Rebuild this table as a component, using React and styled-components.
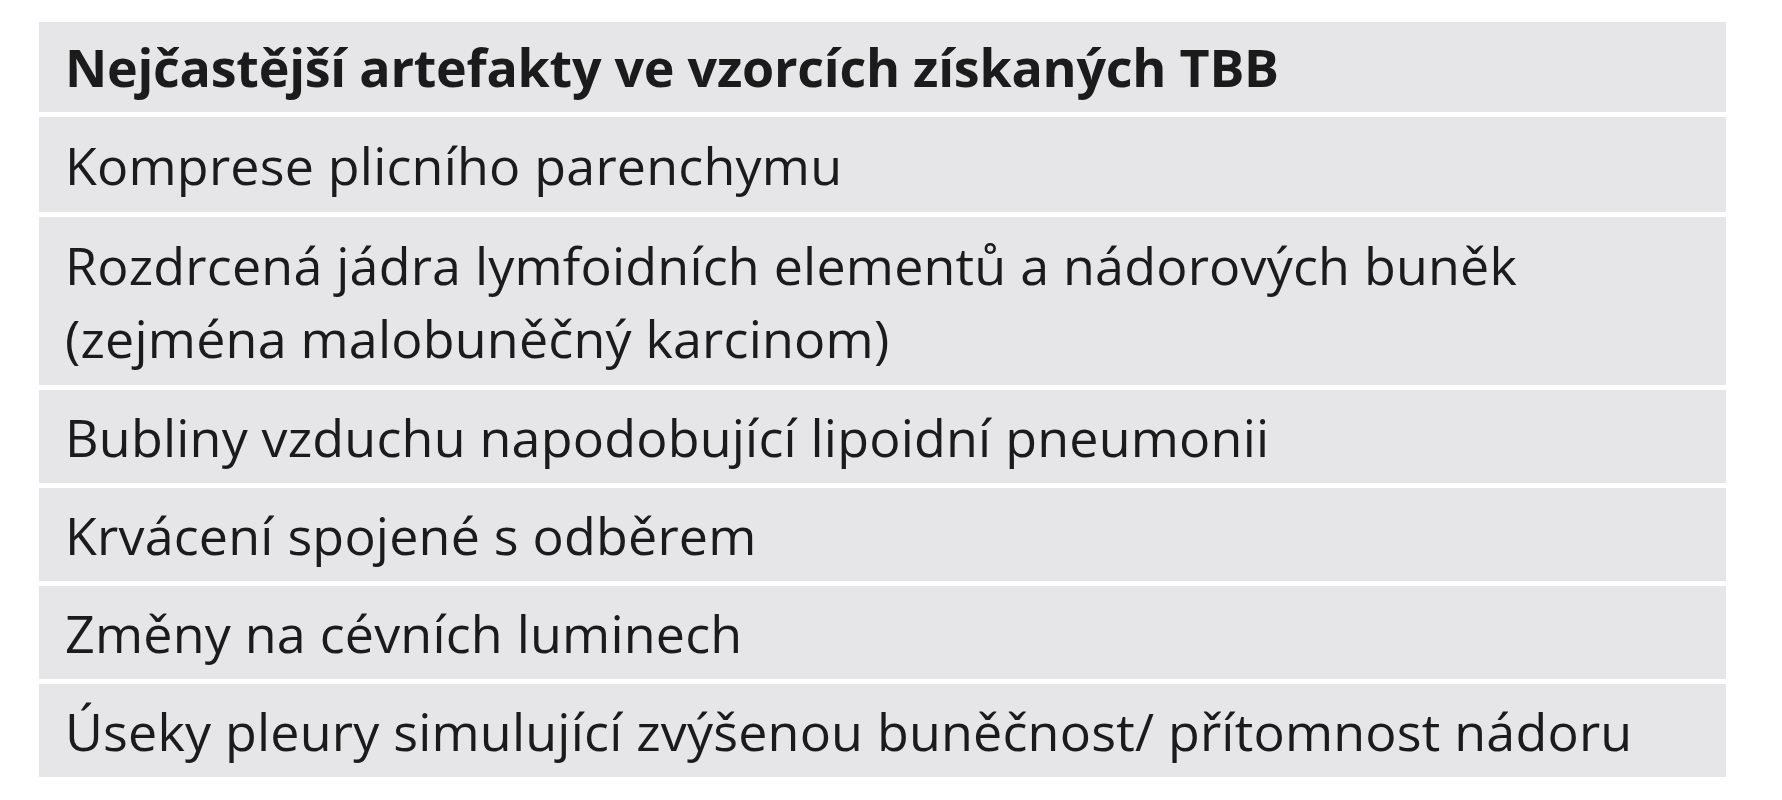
import React from "react";
import styled, { createGlobalStyle } from "styled-components";

const Global = createGlobalStyle`
  html, body { margin: 0; padding: 0; background: #ffffff; }
  body { font-family: "Open Sans", "Noto Sans", sans-serif; }
`;

const Page = styled.div`
  padding: 22px 0 0 39px;
  width: 1687px;
`;

const Table = styled.div`
  display: flex;
  flex-direction: column;
  gap: 5px;
`;

const Row = styled.div`
  background: #e6e6e8;
  padding: ${(p) => (p.$head ? "8px 26px 9px" : `${p.$pad}px 26px`)};
  font-size: 52px;
  line-height: 73px;
  color: #1b1b1b;
  font-weight: ${(p) => (p.$head ? 700 : 400)};
  letter-spacing: ${(p) => (p.$head ? "-0.25px" : "0.2px")};
`;

const rows = [
  { pad: 11, lines: ["Komprese plicního parenchymu"] },
  {
    pad: 11,
    lines: ["Rozdrcená jádra lymfoidních elementů a nádorových buněk", "(zejména malobuněčný karcinom)"],
  },
  { pad: 10, lines: ["Bubliny vzduchu napodobující lipoidní pneumonii"] },
  { pad: 10, lines: ["Krvácení spojené s odběrem"] },
  { pad: 10, lines: ["Změny na cévních luminech"] },
  { pad: 10, lines: ["Úseky pleury simulující zvýšenou buněčnost/ přítomnost nádoru"] },
];

export default function App() {
  return (
    <>
      <Global />
      <Page>
        <Table>
          <Row $head>Nejčastější artefakty ve vzorcích získaných TBB</Row>
          {rows.map((r, i) => (
            <Row key={i} $pad={r.pad}>
              {r.lines.map((l, j) => (
                <React.Fragment key={j}>
                  {j > 0 && <br />}
                  {l}
                </React.Fragment>
              ))}
            </Row>
          ))}
        </Table>
      </Page>
    </>
  );
}
